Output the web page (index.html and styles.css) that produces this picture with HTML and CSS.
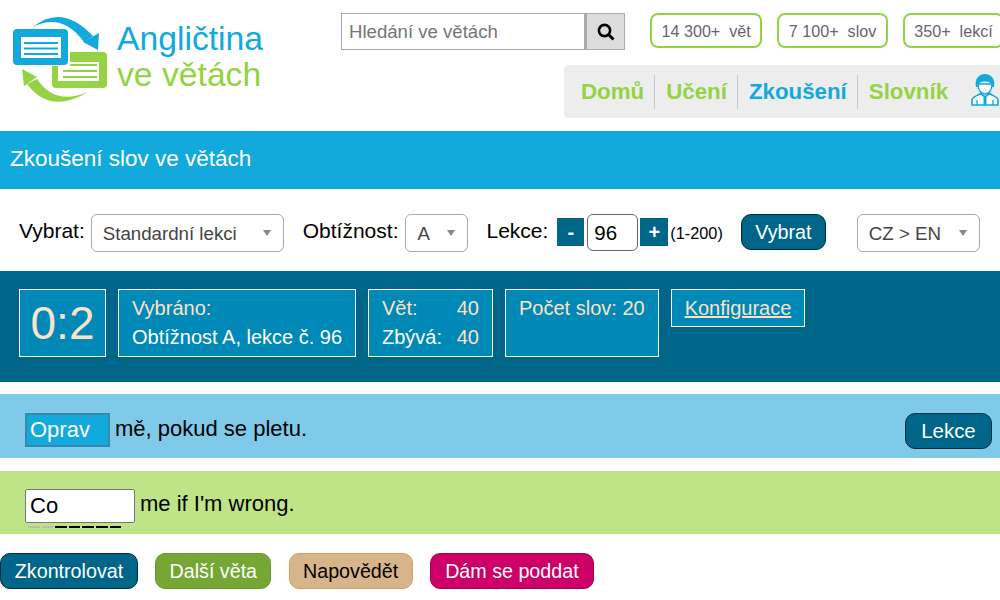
FILE: index.html
```html
<!DOCTYPE html>
<html lang="cs">
<head>
    <meta charset="UTF-8">
    <meta name="viewport" content="width=device-width, initial-scale=1.0">
    <title>Angličtina ve větách</title>
    <link rel="stylesheet" href="styles.css">
</head>
<body>
    <header class="header">
        <div class="logo">
            <svg class="logo-icon" width="96" height="90" viewBox="13 15 96 90">
                <path d="M33 27 Q62 3 93 36 L84 42 Q62 12 33 27 Z" fill="#12a9dc"/>
                <path d="M83 42 L99 33 L98 50 Z" fill="#12a9dc"/>
                <path d="M27 84 Q50 115 88 92 Q55 106 37 79 Z" fill="#93d344"/>
                <path d="M22 69 L37 77 L24 86 Z" fill="#93d344"/>
                <rect x="52" y="52" width="55" height="36" rx="4" fill="#93d344"/>
                <rect x="58" y="62" width="41" height="19" fill="#fff"/>
                <path d="M63 65 H97 M63 71 H97 M63 77 H97" stroke="#93d344" stroke-width="2"/>
                <rect x="50" y="50" width="20" height="16" fill="#fff"/>
                <rect x="13" y="29" width="55" height="36" rx="4" fill="#12a9dc"/>
                <rect x="21" y="37" width="40" height="21" fill="#fff"/>
                <path d="M24 43 H58 M24 48.5 H58 M24 54 H58" stroke="#12a9dc" stroke-width="2"/>
            </svg>
            <div class="logo-text">
                <div class="logo-blue">Angličtina</div>
                <div class="logo-green">ve větách</div>
            </div>
        </div>
        <div class="header-right">
            <div class="top-row">
                <div class="search">
                    <input class="search-input" type="text" placeholder="Hledání ve větách">
                    <button class="search-btn">
                        <svg width="18" height="18" viewBox="0 0 18 18">
                            <circle cx="7.5" cy="7.5" r="5.6" fill="none" stroke="#000" stroke-width="2.6"/>
                            <path d="M11.5 11.5 L16.5 16.5" stroke="#000" stroke-width="3"/>
                        </svg>
                    </button>
                </div>
                <div class="stat">14 300+ &nbsp;vět</div>
                <div class="stat">7 100+ &nbsp;slov</div>
                <div class="stat">350+ &nbsp;lekcí</div>
            </div>
            <nav class="nav">
                <a class="nav-link">Domů</a>
                <a class="nav-link">Učení</a>
                <a class="nav-link active">Zkoušení</a>
                <a class="nav-link">Slovník</a>
                <svg class="user-icon" width="28" height="32" viewBox="0 0 28 32">
                    <path d="M7 10 C7 16 10 20 14 20 C18 20 21 16 21 10 Z" fill="#fff" stroke="#12a9dc" stroke-width="1.3"/>
                    <path d="M5 13 C3 4 9 0 14 0 C19 0 25 4 23 13 L21 13 C21 9 18 7.5 14 7.5 C10 7.5 7 9 7 13 Z" fill="#12a9dc"/>
                    <path d="M1 31 V26 C1 23 6 22 9.5 19.5 L14 23 L18.5 19.5 C22 22 27 23 27 26 V31 Z" fill="#fff" stroke="#12a9dc" stroke-width="1.6"/>
                    <path d="M12.5 23 H15.5 L15.5 31 H12.5 Z" fill="#12a9dc"/>
                    <path d="M6 26 V31 M22 26 V31" stroke="#12a9dc" stroke-width="1.3"/>
                </svg>
            </nav>
        </div>
    </header>

    <h1 class="title">Zkoušení slov ve větách</h1>

    <div class="filters">
        <label class="filter-label label-pick">Vybrat:</label>
        <div class="select select-lesson">Standardní lekci<span class="caret"></span></div>
        <label class="filter-label label-level">Obtížnost:</label>
        <div class="select select-level">A<span class="caret"></span></div>
        <label class="filter-label label-lesson">Lekce:</label>
        <button class="step step-minus">-</button>
        <input class="lesson-input" type="text" value="96">
        <button class="step step-plus">+</button>
        <span class="range">(1-200)</span>
        <button class="btn btn-dark btn-pick">Vybrat</button>
        <div class="select select-lang">CZ &gt; EN<span class="caret"></span></div>
    </div>

    <section class="stats-bar">
        <div class="box box-score">0:2</div>
        <div class="box box-picked">
            <div class="tan">Vybráno:</div>
            <div>Obtížnost A, lekce č. 96</div>
        </div>
        <div class="box box-count">
            <div class="count-row"><span class="tan">Vět:</span><span class="tan">40</span></div>
            <div class="count-row"><span>Zbývá:</span><span class="tan">40</span></div>
        </div>
        <div class="box box-words tan">Počet slov: 20</div>
        <a class="box box-config tan">Konfigurace</a>
    </section>

    <section class="sentence sentence-cz">
        <span class="word-shown">Oprav</span>
        <span>mě, pokud se pletu.</span>
        <button class="btn btn-dark btn-lesson">Lekce</button>
    </section>

    <section class="sentence sentence-en">
        <div class="answer">
            <input class="answer-input" type="text" value="Co">
            <div class="dashes">
                <i class="dash done"></i><i class="dash done"></i><i class="dash"></i><i class="dash"></i><i class="dash"></i><i class="dash"></i><i class="dash"></i>
            </div>
        </div>
        <span class="answer-rest">me if I'm wrong.</span>
    </section>

    <div class="actions">
        <button class="btn btn-dark btn-check">Zkontrolovat</button>
        <button class="btn btn-green">Další věta</button>
        <button class="btn btn-tan">Napovědět</button>
        <button class="btn btn-pink">Dám se poddat</button>
    </div>
</body>
</html>
```

FILE: styles.css
```css
body {
    font-family: "Liberation Sans", Arial, sans-serif;
    margin: 0;
    background-color: #fff;
    color: #000;
    overflow: hidden;
}
.header {
    display: flex;
    height: 131px;
}
.logo {
    display: flex;
    width: 341px;
    flex-shrink: 0;
    padding: 15px 0 0 13px;
    box-sizing: border-box;
}
.logo-icon {
    flex-shrink: 0;
}
.logo-text {
    margin-left: 8px;
    margin-top: 5px;
    font-size: 33.7px;
    line-height: 36px;
}
.logo-blue {
    color: #12a9dc;
}
.logo-green {
    color: #93d344;
}
.header-right {
    flex-grow: 1;
    min-width: 0;
}
.top-row {
    display: flex;
    align-items: flex-start;
    padding-top: 13px;
    white-space: nowrap;
}
.search {
    display: flex;
    width: 284px;
    height: 37px;
    margin-right: 25px;
}
.search-input {
    width: 244px;
    box-sizing: border-box;
    border: 1px solid #aaa;
    padding: 0 7px;
    font-family: inherit;
    font-size: 18.6px;
    outline: none;
}
.search-input::placeholder {
    color: #757575;
    opacity: 1;
}
.search-btn {
    width: 40px;
    border: 1px solid #aaa;
    border-left-width: 2px;
    background-color: #ddd;
    padding: 3px 0 0;
}
.stat {
    flex-shrink: 0;
    height: 35px;
    line-height: 32px;
    box-sizing: border-box;
    border: 2px solid #93d344;
    border-radius: 8px;
    padding: 0 9.5px;
    margin-right: 15px;
    font-size: 16.15px;
    color: #666;
}
.nav {
    display: flex;
    align-items: center;
    height: 53px;
    margin: 15px 0 0 223px;
    background-color: #ededed;
    border-radius: 5px 0 0 5px;
    padding-left: 17px;
    white-space: nowrap;
}
.nav-link {
    font-size: 22.3px;
    font-weight: bold;
    color: #93d344;
    padding-right: 10px;
    margin-right: 11px;
    border-right: 1px solid #c8c8d2;
    line-height: 34px;
}
.nav-link:nth-of-type(4) {
    border-right: none;
    padding-right: 0;
    margin-right: 23px;
}
.nav-link.active {
    color: #12a9dc;
}
.user-icon {
    margin-top: -3px;
    flex-shrink: 0;
}
.title {
    margin: 0;
    background-color: #12a9dc;
    color: #fff;
    font-size: 22.5px;
    font-weight: normal;
    line-height: 56px;
    height: 58px;
    padding-left: 10px;
}
.filters {
    display: flex;
    align-items: flex-start;
    height: 82px;
    padding: 25px 0 0 19px;
    box-sizing: border-box;
    font-size: 21px;
}
.filter-label {
    line-height: 34px;
}
.label-pick {
    margin-right: 6px;
}
.label-level {
    margin-left: 19px;
    margin-right: 7px;
}
.label-lesson {
    margin-left: 18px;
    margin-right: 9px;
}
.select {
    display: flex;
    align-items: center;
    justify-content: space-between;
    height: 38px;
    box-sizing: border-box;
    border: 1px solid #aaa;
    border-radius: 6px;
    background-color: #fff;
    color: #444;
    font-size: 18.7px;
    padding: 2px 12px 0 11px;
}
.caret {
    width: 0;
    height: 0;
    border-left: 4.5px solid transparent;
    border-right: 4.5px solid transparent;
    border-top: 6px solid #888;
    margin-top: -3px;
}
.select-lesson {
    width: 193px;
}
.select-level {
    width: 63px;
}
.select-lang {
    width: 123px;
    margin-left: 31px;
}
.step {
    width: 27px;
    height: 28px;
    margin-top: 4px;
    border: none;
    padding: 0;
    background-color: #006689;
    color: #fff;
    font-family: inherit;
    font-size: 20px;
    font-weight: bold;
}
.step-plus {
    width: 28px;
    margin-left: 2px;
}
.lesson-input {
    width: 51px;
    height: 37px;
    box-sizing: border-box;
    margin-left: 3px;
    border: 1px solid #666;
    border-radius: 6px;
    padding: 0 6px;
    font-family: inherit;
    font-size: 20.5px;
}
.range {
    font-size: 16.3px;
    line-height: 38px;
    margin-left: 2px;
}
.btn {
    height: 36px;
    box-sizing: border-box;
    border-radius: 10px;
    padding: 0;
    font-family: inherit;
    font-size: 19.7px;
    white-space: nowrap;
}
.btn-dark {
    background-color: #006689;
    border: 1px solid #032c3c;
    color: #fff;
}
.btn-green {
    width: 116px;
    background-color: #76a735;
    border: 1px solid #6b9a33;
    color: #fff;
}
.btn-tan {
    width: 124px;
    background-color: #d8b48a;
    border: 1px solid #d2a263;
    color: #000;
}
.btn-pink {
    width: 164px;
    background-color: #cc0066;
    border: 1px solid #a80055;
    color: #fff;
}
.btn-check {
    width: 138px;
}
.btn-pick {
    width: 85px;
    margin-left: 18px;
}
.stats-bar {
    display: flex;
    align-items: flex-start;
    gap: 12px;
    height: 111px;
    padding: 18px 19px 0;
    box-sizing: border-box;
    background-color: #006689;
    color: #fff;
    font-size: 20px;
    white-space: nowrap;
}
.box {
    height: 68px;
    box-sizing: border-box;
    border: 1px solid #fff;
    background-color: #0088b6;
    line-height: 29px;
    padding: 4px 13px;
}
.tan {
    color: #fbe3c9;
}
.box-score {
    width: 87px;
    padding: 0;
    text-align: center;
    font-size: 46px;
    line-height: 66px;
    color: #fbe3c9;
}
.box-picked {
    width: 238px;
}
.box-count {
    width: 125px;
}
.count-row {
    display: flex;
    justify-content: space-between;
}
.box-words {
    width: 154px;
}
.box-config {
    width: 134px;
    height: 38px;
    text-align: center;
    padding: 4px 0;
    text-decoration: underline;
}
.sentence {
    display: flex;
    align-items: flex-start;
    box-sizing: border-box;
    padding-left: 25px;
    font-size: 22px;
}
.sentence-cz {
    height: 64px;
    margin-top: 12px;
    background-color: #7fcae9;
    padding-top: 19px;
    line-height: 32px;
}
.word-shown {
    width: 85px;
    height: 34px;
    box-sizing: border-box;
    border: 2px solid #3a89ad;
    background-color: #12a9dc;
    color: #fff;
    line-height: 30px;
    padding-left: 3px;
    margin-right: 5px;
}
.btn-lesson {
    width: 87px;
    margin-left: auto;
    margin-right: 8px;
    font-size: 20.4px;
}
.sentence-en {
    height: 63px;
    margin-top: 13px;
    background-color: #bfe487;
    padding-top: 18px;
}
.answer {
    width: 110px;
    margin-right: 5px;
}
.answer-input {
    width: 110px;
    height: 34px;
    box-sizing: border-box;
    display: block;
    border: 1px solid #777;
    border-radius: 2px;
    padding: 0 4px;
    font-family: inherit;
    font-size: 22px;
}
.answer-rest {
    line-height: 30px;
}
.dashes {
    display: flex;
    gap: 2px;
    margin: 3px 0 0 3px;
}
.dash {
    width: 11.6px;
    height: 2px;
    background-color: #000;
}
.dash.done {
    background-color: #bbb;
}
.actions {
    display: flex;
    gap: 17.3px;
    padding-top: 19px;
}
```
